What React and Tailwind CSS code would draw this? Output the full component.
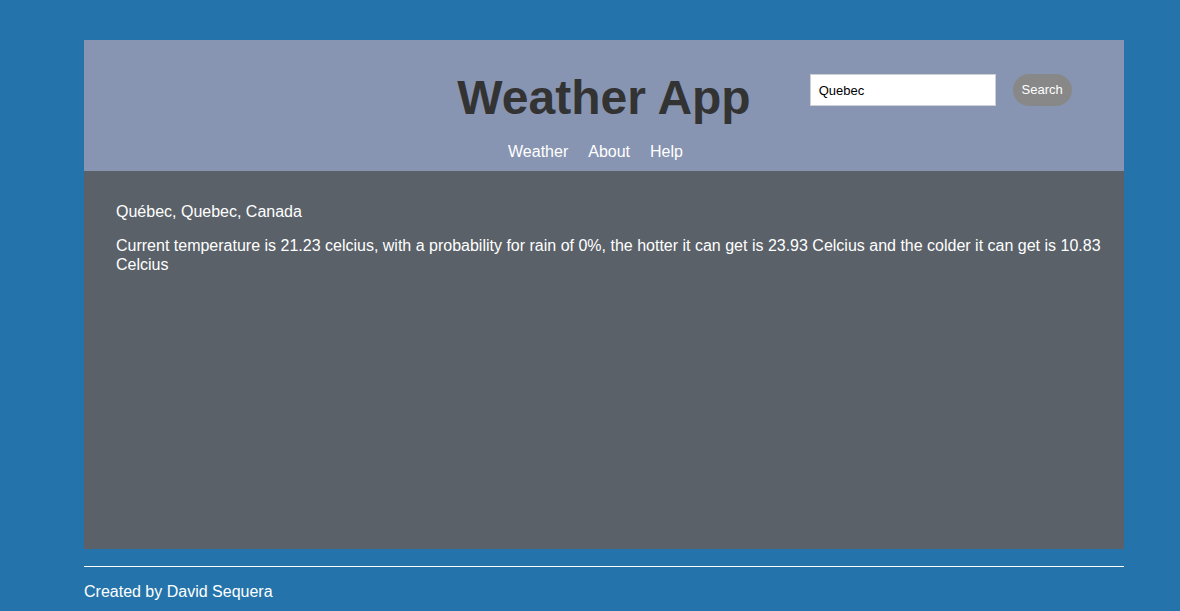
import React from 'react';

export default function App() {
    return (
        <div className="min-h-screen bg-[#2474ab] pt-10 text-white font-['Liberation_Sans',Arial,sans-serif]">
            <div className="w-[1040px] ml-[84px]">
                {/* Header */}
                <header className="bg-[#8795b2] pt-[30px] pb-[10px]">
                    <div className="grid grid-cols-[1fr_auto_1fr]">
                        <div></div>
                        <h1 className="text-[48px] leading-[55px] font-bold text-[#333333]">Weather App</h1>
                        <form className="flex items-start pl-[59px] pt-1" onSubmit={(e) => e.preventDefault()}>
                            <input
                                type="text"
                                defaultValue="Quebec"
                                className="w-[186px] h-[32px] bg-white border border-[#cfcfd6] px-2 text-[13px] text-black outline-none"
                            />
                            <button className="ml-[17px] w-[59px] h-[32px] rounded-full bg-[#888888] text-white text-[13px]">
                                Search
                            </button>
                        </form>
                    </div>
                    <nav className="mt-[18px] flex justify-center gap-5 pr-[17px] text-base leading-[18px]">
                        <a href="#">Weather</a>
                        <a href="#">About</a>
                        <a href="#">Help</a>
                    </nav>
                </header>

                {/* Main */}
                <main className="bg-[#5a6169] h-[378px] pl-8 pr-3 pt-[31px] text-base leading-[19px]">
                    <p>Québec, Quebec, Canada</p>
                    <p className="mt-[15px]">
                        Current temperature is 21.23 celcius, with a probability for rain of 0%, the hotter it can get is 23.93 Celcius and the colder it can get is 10.83 Celcius
                    </p>
                </main>

                <footer className="mt-[17px]">
                    <hr className="border-0 border-t border-white" />
                    <p className="mt-[15px] text-base leading-[19px]">Created by David Sequera</p>
                </footer>
            </div>
        </div>
    );
}
